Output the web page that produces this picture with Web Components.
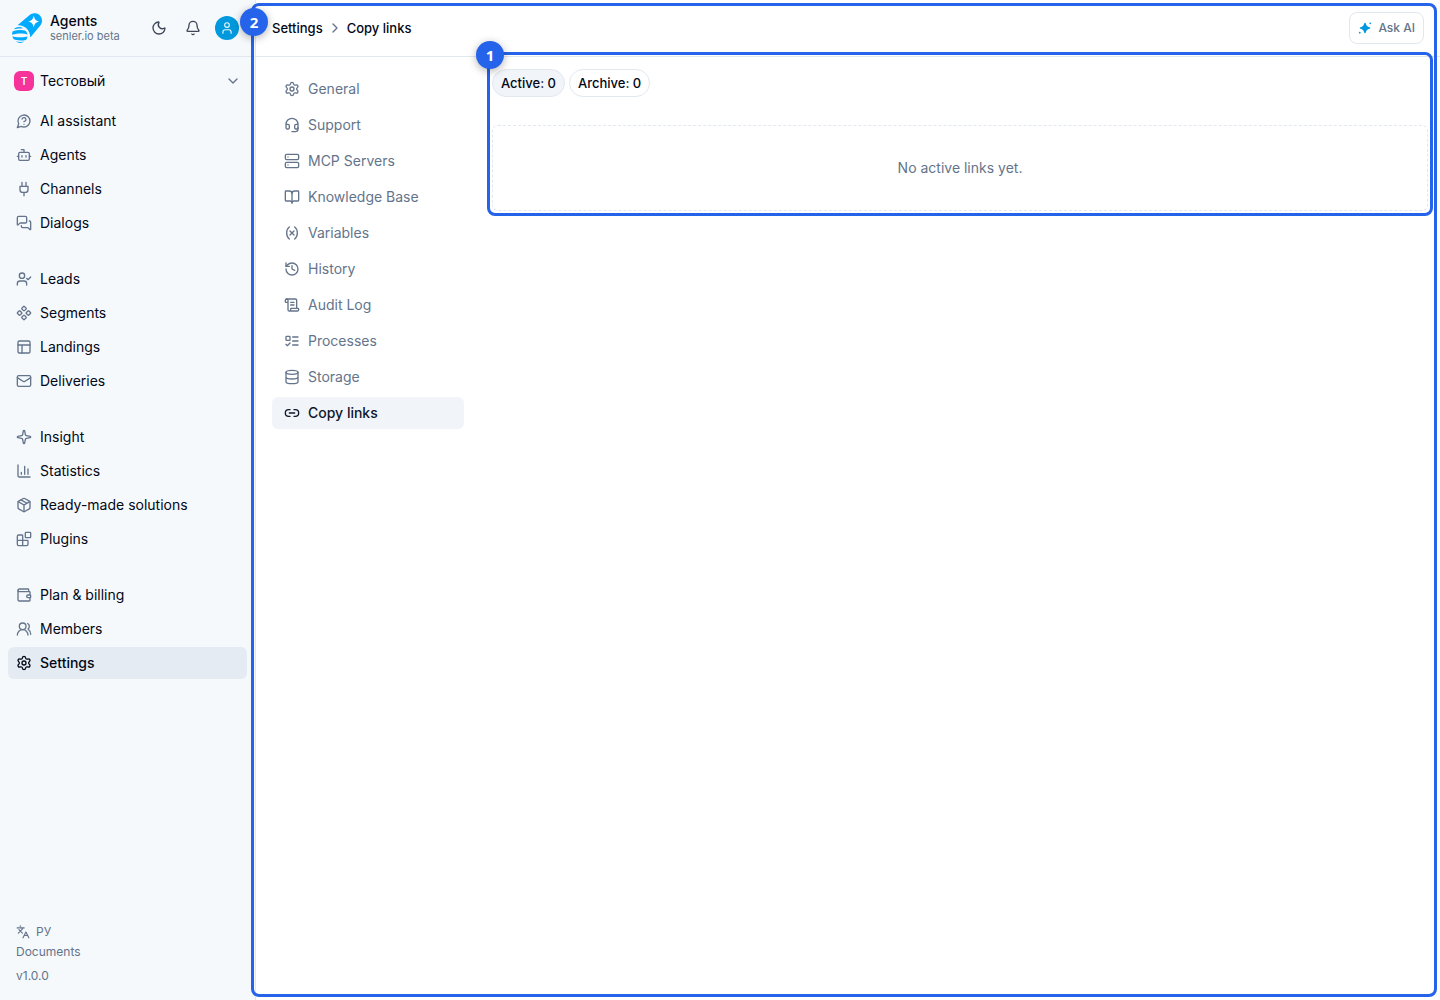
<!DOCTYPE html>
<html lang="en">
<head>
<meta charset="utf-8">
<meta name="viewport" content="width=device-width, initial-scale=1">
<title>Copy links</title>
<style>
  html, body { margin: 0; height: 100%; }
  body {
    font-family: Inter, "Liberation Sans", sans-serif;
    font-size: 14px;
    line-height: 20px;
    color: #020817;
    background: #fff;
    --muted: #64748b;
    --line: #e2e8f0;
    --accent: #2563eb;
    --brand: #0099dd;
  }
</style>
</head>
<body>
<app-shell>
  <app-sidebar slot="sidebar">
    <brand-header slot="top"></brand-header>
    <team-switcher slot="top" initial="T" name="Тестовый"></team-switcher>
    <nav-group>
      <nav-item icon="help">AI assistant</nav-item>
      <nav-item icon="bot">Agents</nav-item>
      <nav-item icon="plug">Channels</nav-item>
      <nav-item icon="messages">Dialogs</nav-item>
    </nav-group>
    <nav-group>
      <nav-item icon="userCheck">Leads</nav-item>
      <nav-item icon="component">Segments</nav-item>
      <nav-item icon="layout">Landings</nav-item>
      <nav-item icon="mail">Deliveries</nav-item>
    </nav-group>
    <nav-group>
      <nav-item icon="sparkle">Insight</nav-item>
      <nav-item icon="chart">Statistics</nav-item>
      <nav-item icon="package">Ready-made solutions</nav-item>
      <nav-item icon="blocks">Plugins</nav-item>
    </nav-group>
    <nav-group>
      <nav-item icon="wallet">Plan &amp; billing</nav-item>
      <nav-item icon="users">Members</nav-item>
      <nav-item icon="settings" active>Settings</nav-item>
    </nav-group>
    <sidebar-footer slot="bottom"></sidebar-footer>
  </app-sidebar>
  <page-header slot="header"></page-header>
  <settings-nav slot="subnav">
    <nav-item sub icon="settings">General</nav-item>
    <nav-item sub icon="headset">Support</nav-item>
    <nav-item sub icon="server">MCP Servers</nav-item>
    <nav-item sub icon="book">Knowledge Base</nav-item>
    <nav-item sub icon="variable">Variables</nav-item>
    <nav-item sub icon="history">History</nav-item>
    <nav-item sub icon="scroll">Audit Log</nav-item>
    <nav-item sub icon="list">Processes</nav-item>
    <nav-item sub icon="database">Storage</nav-item>
    <nav-item sub icon="link" active>Copy links</nav-item>
  </settings-nav>
  <links-panel></links-panel>
</app-shell>

<script>
const ICONS = {
  help: '<path d="M7.9 20A9 9 0 1 0 4 16.1L2 22Z"/><path d="M9.09 9a3 3 0 0 1 5.83 1c0 2-3 3-3 3"/><path d="M12 17h.01"/>',
  bot: '<path d="M12 8V4H8"/><rect width="16" height="12" x="4" y="8" rx="2"/><path d="M2 14h2M20 14h2M15 13v2M9 13v2"/>',
  plug: '<path d="M12 22v-5M9 8V2M15 8V2M18 8v5a4 4 0 0 1-4 4h-4a4 4 0 0 1-4-4V8Z"/>',
  messages: '<path d="M16 10a2 2 0 0 1-2 2H6.828a2 2 0 0 0-1.414.586l-2.202 2.202A.71.71 0 0 1 2 14.286V4a2 2 0 0 1 2-2h10a2 2 0 0 1 2 2z"/><path d="M20 9a2 2 0 0 1 2 2v10.286a.71.71 0 0 1-1.212.502l-2.202-2.202A2 2 0 0 0 17.172 19H10a2 2 0 0 1-2-2v-1"/>',
  userCheck: '<path d="m16 11 2 2 4-4"/><path d="M16 21v-2a4 4 0 0 0-4-4H6a4 4 0 0 0-4 4v2"/><circle cx="9" cy="7" r="4"/>',
  component: '<path d="M15.536 11.293a1 1 0 0 0 0 1.414l2.376 2.377a1 1 0 0 0 1.414 0l2.377-2.377a1 1 0 0 0 0-1.414l-2.377-2.377a1 1 0 0 0-1.414 0z"/><path d="M2.297 11.293a1 1 0 0 0 0 1.414l2.377 2.377a1 1 0 0 0 1.414 0l2.377-2.377a1 1 0 0 0 0-1.414L6.088 8.916a1 1 0 0 0-1.414 0z"/><path d="M8.916 17.912a1 1 0 0 0 0 1.415l2.377 2.376a1 1 0 0 0 1.414 0l2.377-2.376a1 1 0 0 0 0-1.415l-2.377-2.376a1 1 0 0 0-1.414 0z"/><path d="M8.916 4.674a1 1 0 0 0 0 1.414l2.377 2.376a1 1 0 0 0 1.414 0l2.377-2.376a1 1 0 0 0 0-1.414l-2.377-2.377a1 1 0 0 0-1.414 0z"/>',
  layout: '<rect width="18" height="18" x="3" y="3" rx="2"/><path d="M3 9h18M9 21V9"/>',
  mail: '<path d="m22 7-8.991 5.727a2 2 0 0 1-2.009 0L2 7"/><rect x="2" y="4" width="20" height="16" rx="2"/>',
  sparkle: '<path d="M11.017 2.814a1 1 0 0 1 1.966 0l1.051 5.558a2 2 0 0 0 1.594 1.594l5.558 1.051a1 1 0 0 1 0 1.966l-5.558 1.051a2 2 0 0 0-1.594 1.594l-1.051 5.558a1 1 0 0 1-1.966 0l-1.051-5.558a2 2 0 0 0-1.594-1.594l-5.558-1.051a1 1 0 0 1 0-1.966l5.558-1.051a2 2 0 0 0 1.594-1.594z"/>',
  chart: '<path d="M3 3v16a2 2 0 0 0 2 2h16M18 17V9M13 17V5M8 17v-3"/>',
  package: '<path d="M11 21.73a2 2 0 0 0 2 0l7-4A2 2 0 0 0 21 16V8a2 2 0 0 0-1-1.73l-7-4a2 2 0 0 0-2 0l-7 4A2 2 0 0 0 3 8v8a2 2 0 0 0 1 1.73z"/><path d="M12 22V12M3.29 7 12 12l8.71-5M7.5 4.27l9 5.15"/>',
  blocks: '<path d="M10 22V7a1 1 0 0 0-1-1H4a2 2 0 0 0-2 2v12a2 2 0 0 0 2 2h12a2 2 0 0 0 2-2v-5a1 1 0 0 0-1-1H2"/><rect x="14" y="2" width="8" height="8" rx="1"/>',
  wallet: '<path d="M19 7V4a1 1 0 0 0-1-1H5a2 2 0 0 0 0 4h15a1 1 0 0 1 1 1v4h-3a2 2 0 0 0 0 4h3a1 1 0 0 0 1-1v-2a1 1 0 0 0-1-1"/><path d="M3 5v14a2 2 0 0 0 2 2h15a1 1 0 0 0 1-1v-4"/>',
  users: '<path d="M18 21a8 8 0 0 0-16 0"/><circle cx="10" cy="8" r="5"/><path d="M22 20c0-3.37-2-6.5-4-8a5 5 0 0 0-.45-8.3"/>',
  user: '<circle cx="12" cy="7" r="4"/><path d="M19 21v-2a4 4 0 0 0-4-4H9a4 4 0 0 0-4 4v2"/>',
  settings: '<path d="M9.671 4.136a2.34 2.34 0 0 1 4.659 0 2.34 2.34 0 0 0 3.319 1.915 2.34 2.34 0 0 1 2.33 4.033 2.34 2.34 0 0 0 0 3.831 2.34 2.34 0 0 1-2.33 4.033 2.34 2.34 0 0 0-3.319 1.915 2.34 2.34 0 0 1-4.659 0 2.34 2.34 0 0 0-3.32-1.915 2.34 2.34 0 0 1-2.33-4.033 2.34 2.34 0 0 0 0-3.831A2.34 2.34 0 0 1 6.35 6.051a2.34 2.34 0 0 0 3.319-1.915"/><circle cx="12" cy="12" r="3"/>',
  languages: '<path d="m5 8 6 6M4 14l6-6 2-3M2 5h12M7 2h1M22 22l-5-10-5 10M14 18h6"/>',
  headset: '<path d="M3 11h3a2 2 0 0 1 2 2v3a2 2 0 0 1-2 2H5a2 2 0 0 1-2-2v-5Zm0 0a9 9 0 1 1 18 0m0 0v5a2 2 0 0 1-2 2h-1a2 2 0 0 1-2-2v-3a2 2 0 0 1 2-2h3Z"/><path d="M21 16v2a4 4 0 0 1-4 4h-5"/>',
  server: '<rect width="20" height="8" x="2" y="2" rx="2"/><rect width="20" height="8" x="2" y="14" rx="2"/><path d="M6 6h.01M6 18h.01"/>',
  book: '<path d="M12 7v14"/><path d="M3 18a1 1 0 0 1-1-1V4a1 1 0 0 1 1-1h5a4 4 0 0 1 4 4 4 4 0 0 1 4-4h5a1 1 0 0 1 1 1v13a1 1 0 0 1-1 1h-6a3 3 0 0 0-3 3 3 3 0 0 0-3-3z"/>',
  variable: '<path d="M8 21s-4-3-4-9 4-9 4-9M16 3s4 3 4 9-4 9-4 9M15 9l-6 6M9 9l6 6"/>',
  history: '<path d="M3 12a9 9 0 1 0 9-9 9.75 9.75 0 0 0-6.74 2.74L3 8"/><path d="M3 3v5h5M12 7v5l4 2"/>',
  scroll: '<path d="M15 12h-5M15 8h-5M19 17V5a2 2 0 0 0-2-2H4"/><path d="M8 21h12a2 2 0 0 0 2-2v-1a1 1 0 0 0-1-1H11a1 1 0 0 0-1 1v1a2 2 0 1 1-4 0V5a2 2 0 1 0-4 0v2a1 1 0 0 0 1 1h3"/>',
  list: '<rect x="3" y="5" width="6" height="6" rx="1"/><path d="m3 17 2 2 4-4M13 6h8M13 12h8M13 18h8"/>',
  database: '<ellipse cx="12" cy="5" rx="9" ry="3"/><path d="M3 5v14a9 3 0 0 0 18 0V5M3 12a9 3 0 0 0 18 0"/>',
  link: '<path d="M9 17H7A5 5 0 0 1 7 7h2M15 7h2a5 5 0 1 1 0 10h-2M8 12h8"/>',
  moon: '<path d="M20.985 12.486a9 9 0 1 1-9.473-9.472c.405-.022.617.46.402.803a6 6 0 0 0 8.268 8.268c.344-.215.825-.004.803.401"/>',
  bell: '<path d="M10.268 21a2 2 0 0 0 3.464 0M3.262 15.326A1 1 0 0 0 4 17h16a1 1 0 0 0 .74-1.673C19.41 13.956 18 12.499 18 8A6 6 0 0 0 6 8c0 4.499-1.411 5.956-2.738 7.326"/>',
  down: '<path d="m6 9 6 6 6-6"/>',
  right: '<path d="m9 18 6-6-6-6"/>',
  stars: '<g fill="currentColor" stroke="none"><path d="M10.600 4.200c.5-1.600 2.300-1.600 2.800 0 1 3.800 2.600 5.400 6.400 6.400 1.600.5 1.600 2.300 0 2.800-3.800 1-5.400 2.600-6.400 6.400-.5 1.600-2.300 1.600-2.800 0-1-3.800-2.600-5.400-6.400-6.400-1.600-.5-1.600-2.300 0-2.800 3.800-1 5.400-2.600 6.400-6.400z"/><circle cx="21" cy="4" r="1.500"/><circle cx="3" cy="20" r="1.500"/></g>'
};

const define = (name, template) => {
  customElements.define(name, class extends HTMLElement {
    connectedCallback() {
      if (this.shadowRoot) return;
      this.attachShadow({ mode: "open" }).innerHTML = template(this);
    }
  });
};

define("ui-icon", el => `
  <style>
    :host { display: block; flex: none; width: var(--size, 16px); height: var(--size, 16px); }
    svg { display: block; width: 100%; height: 100%; }
  </style>
  <svg viewBox="0 0 24 24" fill="none" stroke="currentColor" stroke-width="2"
    stroke-linecap="round" stroke-linejoin="round" aria-hidden="true">${ICONS[el.getAttribute("name")]}</svg>`);

define("app-shell", () => `
  <style>
    :host { display: flex; min-height: 100vh; }
    .side { flex: none; display: flex; }
    main { position: relative; flex: 1; min-width: 0; display: flex; flex-direction: column; }
    .body { flex: 1; display: flex; gap: 28px; padding: 0 12px 0 16px; }
    .content { flex: 1; min-width: 0; }
    callout-frame { inset: 3px 3px 3px -5px; }
  </style>
  <div class="side"><slot name="sidebar"></slot></div>
  <main>
    <slot name="header"></slot>
    <div class="body">
      <slot name="subnav"></slot>
      <div class="content"><slot></slot></div>
    </div>
    <callout-frame number="2" low></callout-frame>
  </main>`);

define("callout-frame", el => `
  <style>
    :host {
      position: absolute; z-index: 2; box-sizing: border-box; pointer-events: none;
      border: 3px solid var(--accent); border-radius: 8px;
    }
    .badge {
      position: absolute; left: -14px; top: -14px; width: 28px; height: 28px; border-radius: 50%;
      display: flex; align-items: center; justify-content: center;
      background: var(--accent); color: #fff; font-family: "Open Sans", "Noto Sans", sans-serif;
      font-size: 15px; font-weight: 700;
      box-shadow: 0 2px 8px rgba(0, 0, 0, .3);
    }
    :host([low]) .badge { top: 2px; }
  </style>
  <span class="badge">${el.getAttribute("number")}</span>`);

define("app-sidebar", () => `
  <style>
    :host { display: flex; flex-direction: column; box-sizing: border-box; width: 256px;
      background: #f5f9fc; border-right: 1px solid var(--line); }
    nav { flex: 1; display: flex; flex-direction: column; gap: 24px; padding: 0 8px; }
  </style>
  <slot name="top"></slot>
  <nav><slot></slot></nav>
  <slot name="bottom"></slot>`);

define("brand-header", () => `
  <style>
    :host { display: flex; align-items: center; box-sizing: border-box; height: 57px; padding: 0 16px 0 12px;
      border-bottom: 1px solid var(--line); }
    .logo { width: 30px; height: 30px; margin-right: 8px; flex: none; }
    .name { flex: 1; display: flex; flex-direction: column; }
    strong { font-size: 14px; line-height: 16px; font-weight: 500; }
    small { font-size: 11px; line-height: 14px; color: var(--muted); }
    .actions { display: flex; align-items: center; gap: 4px; }
    button { all: unset; box-sizing: border-box; display: flex; align-items: center; justify-content: center;
      width: 30px; height: 30px; color: #3f4656; cursor: pointer; }
    .avatar { width: 24px; height: 24px; border-radius: 50%; background: var(--brand); color: #e6f5fc; margin-left: 3px; }
    .avatar ui-icon { --size: 14px; }
  </style>
  <svg class="logo" viewBox="0 0 30 30" aria-hidden="true">
    <path d="M18 1.800C21 -.3 25 -.3 27.700 2.200 30.500 5 30.700 9.300 28.500 12.200L18.300 24.500C18.500 17.500 12.500 11.500 5.500 12.200Z" fill="#00aaff"/>
    <path d="M21.800 2.800c.8 3.700 2 4.900 5.500 5.700-3.500.9-4.700 2.100-5.500 5.700-.9-3.600-2.100-4.800-5.600-5.700 3.500-.8 4.700-2 5.600-5.700z" fill="#fff"/>
    <path d="M2 16.200C4 13.700 8 13.300 11.200 15.200 7.500 15.300 4.500 15.700 2 16.200Z" fill="#00aaff"/>
    <path d="M.8 18.200C5 17 10 16.700 13.500 17.700c1.200 1.200 1.800 2.500 2 4C11 19.700 5 20.700 .1 21.700 0 20.500.2 19.300.8 18.200Z" fill="#00aaff"/>
    <path d="M.4 23.200C4 24.700 10 24.500 15.500 23.400c-.2 1.400-.7 2.500-1.500 3.500-4.500.8-9 .8-12.200-.6-.8-1-1.200-2-1.400-3.100Z" fill="#00aaff"/>
    <path d="M4 28.300c2.600.7 5.400.8 8.300.2-2.400 1.900-5.900 1.900-8.300-.2Z" fill="#00aaff"/>
  </svg>
  <div class="name"><strong>Agents</strong><small>senler.io beta</small></div>
  <div class="actions">
    <button aria-label="Dark theme"><ui-icon name="moon"></ui-icon></button>
    <button aria-label="Notifications"><ui-icon name="bell"></ui-icon></button>
    <button class="avatar" aria-label="Account"><ui-icon name="user"></ui-icon></button>
  </div>`);

define("team-switcher", el => `
  <style>
    :host { display: block; padding: 8px 8px; }
    button { all: unset; box-sizing: border-box; width: 100%; height: 32px; display: flex; align-items: center;
      gap: 6px; padding: 0 6px; cursor: pointer; }
    .mark { width: 20px; height: 20px; border-radius: 6px; background: #f6339a; color: #fff; font-size: 10px;
      font-weight: 600; display: flex; align-items: center; justify-content: center; }
    .name { flex: 1; }
    ui-icon { color: var(--muted); }
  </style>
  <button><span class="mark">${el.getAttribute("initial")}</span><span class="name">${el.getAttribute("name")}</span><ui-icon name="down"></ui-icon></button>`);

define("nav-group", () => `
  <style>:host { display: flex; flex-direction: column; gap: 2px; }</style><slot></slot>`);

define("nav-item", el => `
  <style>
    :host { display: block; }
    a { display: flex; align-items: center; gap: 8px; height: 32px; padding: 0 8px; border-radius: 6px;
      color: inherit; text-decoration: none; white-space: nowrap; }
    ui-icon { color: var(--muted); }
    :host([sub]) a { padding: 0 12px; color: var(--muted); }
    :host([active]) a { background: #e4ebf2; font-weight: 500; }
    :host([sub][active]) a { background: #f1f5f9; color: #0f172a; }
    :host([active]) ui-icon { color: inherit; }
  </style>
  <a href="#"${el.hasAttribute("active") ? ' aria-current="page"' : ""}><ui-icon name="${el.getAttribute("icon")}"></ui-icon><slot></slot></a>`);

define("sidebar-footer", () => `
  <style>
    :host { display: flex; flex-direction: column; align-items: flex-start; padding: 0 16px 16px;
      font-size: 12px; line-height: 16px; color: var(--muted); }
    button { all: unset; display: flex; align-items: center; gap: 6px; cursor: pointer; }
    ui-icon { --size: 14px; }
    a { color: inherit; text-decoration: none; margin: 4px 0 8px; }
  </style>
  <button><ui-icon name="languages"></ui-icon>РУ</button>
  <a href="#">Documents</a>
  <span>v1.0.0</span>`);

define("page-header", () => `
  <style>
    :host { display: flex; align-items: center; justify-content: space-between; box-sizing: border-box;
      height: 57px; padding: 0 16px; border-bottom: 1px solid var(--line); font-size: 13px; font-weight: 500; }
    nav { display: flex; align-items: center; gap: 4px; }
    a { color: inherit; text-decoration: none; }
    ui-icon { color: var(--muted); }
    button { all: unset; box-sizing: border-box; display: flex; align-items: center; gap: 6px; height: 32px;
      padding: 0 8px; border: 1px solid var(--line); border-radius: 8px; color: var(--muted);
      font-size: 12px; font-weight: 500; cursor: pointer; }
    button ui-icon { --size: 14px; color: var(--brand); }
  </style>
  <nav aria-label="Breadcrumb"><a href="#">Settings</a><ui-icon name="right"></ui-icon><span>Copy links</span></nav>
  <button><ui-icon name="stars"></ui-icon>Ask AI</button>`);

define("settings-nav", () => `
  <style>:host { display: block; flex: none; width: 192px; padding-top: 16px; }
  nav { display: flex; flex-direction: column; gap: 4px; }</style>
  <nav aria-label="Settings"><slot></slot></nav>`);

define("links-panel", () => `
  <style>
    :host { position: relative; display: flex; flex-direction: column; gap: 28px; padding-top: 12px; }
    .tabs { display: flex; gap: 4px; }
    button { all: unset; box-sizing: border-box; height: 28px; line-height: 26px; padding: 0 8px;
      border: 1px solid var(--line); border-radius: 14px; font-size: 13px; font-weight: 500; cursor: pointer; }
    [aria-pressed=true] { background: #f1f5f9; }
    .empty { box-sizing: border-box; border: 1px dashed var(--line); border-radius: 6px; padding: 32px;
      text-align: center; color: var(--muted); }
    callout-frame { inset: -5px; }
  </style>
  <div class="tabs">
    <button aria-pressed="true">Active: 0</button>
    <button aria-pressed="false">Archive: 0</button>
  </div>
  <div class="empty">No active links yet.</div>
  <callout-frame number="1"></callout-frame>`);
</script>
</body>
</html>
